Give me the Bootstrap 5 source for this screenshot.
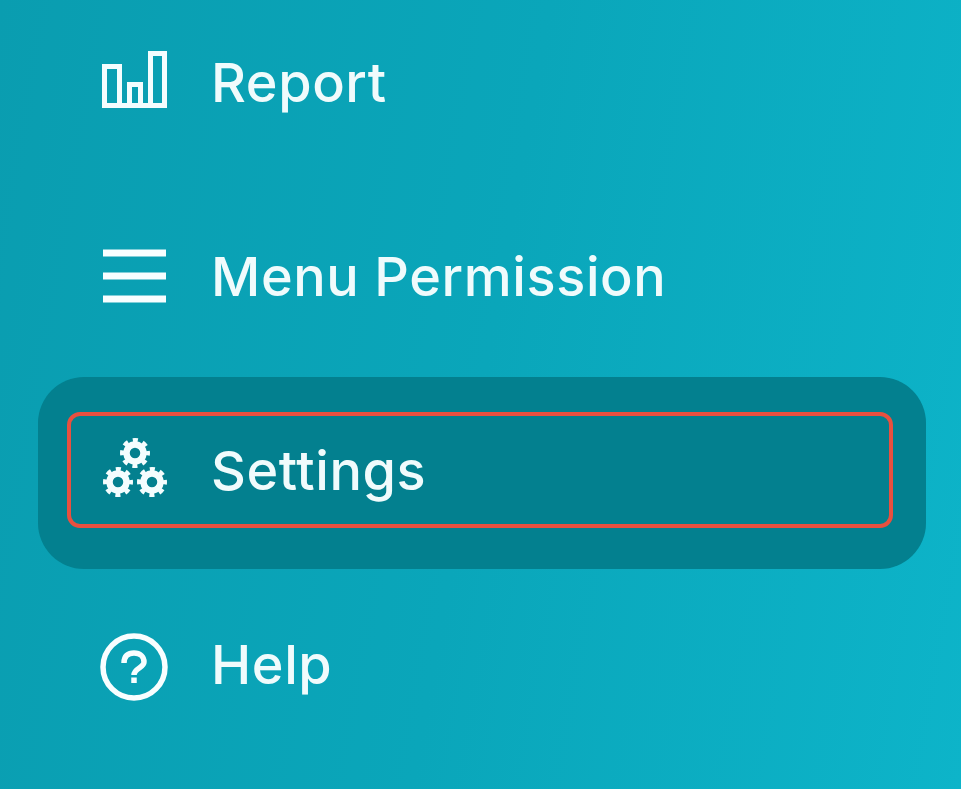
<!DOCTYPE html>
<html lang="en">
<head>
  <meta charset="UTF-8">
  <title>Menu</title>
  <link href="https://cdn.jsdelivr.net/npm/bootstrap@5.3.2/dist/css/bootstrap.min.css" rel="stylesheet">
  <style>
    html, body { height: 100%; }
    body {
      overflow: hidden;
      background: linear-gradient(100deg, #0a9db0 0%, #0aa6ba 50%, #0db4c9 100%);
      font-family: "Inter", "Liberation Sans", sans-serif;
    }
    .side-list { margin-top: -11px; padding: 0 35px 0 38px; gap: 2px; }
    .side-row {
      height: 192px;
      padding: 0 33px 6px 29px;
      border-radius: 46px;
      color: #f0fbfc;
      font-size: 54px;
      font-weight: 500;
      letter-spacing: 0.6px;
      text-decoration: none;
    }
    .side-row:hover { color: #f0fbfc; }
    .side-row.current { background: #03808f; }
    .side-inner {
      height: 116px;
      padding-left: 29px;
      gap: 43px;
      border: 4px solid transparent;
      border-radius: 13px;
    }
    .current .side-inner { border-color: #e8503f; }
    .side-ico { width: 68px; height: 68px; flex: none; overflow: visible; }
    .side-inner > * { filter: blur(0.6px); }
  </style>
</head>
<body>

  <div class="side-list d-flex flex-column">
    <a class="side-row d-flex flex-column justify-content-center" href="#">
      <div class="side-inner d-flex align-items-center">
        <svg class="side-ico" viewBox="0 0 68 68" fill="none" stroke="#f4fdfe" stroke-width="5">
          <rect x="4.5" y="18.5" width="15" height="39"/>
          <rect x="29.5" y="36.5" width="11" height="21"/>
          <rect x="50.5" y="5.5" width="14" height="52"/>
          <path d="M19 57.5H51"/>
        </svg>
        <span>Report</span>
      </div>
    </a>
    <a class="side-row d-flex flex-column justify-content-center" href="#">
      <div class="side-inner d-flex align-items-center">
        <svg class="side-ico" viewBox="0 0 68 68" fill="none" stroke="#f8feff" stroke-width="7">
          <path d="M3 11H66M3 34H66M3 57H66"/>
        </svg>
        <span>Menu Permission</span>
      </div>
    </a>
    <a class="side-row current d-flex flex-column justify-content-center" href="#">
      <div class="side-inner d-flex align-items-center">
        <svg class="side-ico" viewBox="0 0 68 68" fill="none" stroke="#f4fdfe">
          <circle cx="35" cy="17" r="8.5" stroke-width="6.5"/>
          <circle cx="35" cy="17" r="13" stroke-width="4" stroke-dasharray="5.1 5.1" stroke-dashoffset="2.55"/>
          <circle cx="18" cy="46" r="8.5" stroke-width="6.5"/>
          <circle cx="18" cy="46" r="13" stroke-width="4" stroke-dasharray="5.1 5.1" stroke-dashoffset="2.55"/>
          <circle cx="52" cy="46" r="8.5" stroke-width="6.5"/>
          <circle cx="52" cy="46" r="13" stroke-width="4" stroke-dasharray="5.1 5.1" stroke-dashoffset="2.55"/>
        </svg>
        <span>Settings</span>
      </div>
    </a>
    <a class="side-row d-flex flex-column justify-content-center" href="#">
      <div class="side-inner d-flex align-items-center">
        <svg class="side-ico" viewBox="0 0 68 68" fill="none" stroke="#f8feff" stroke-width="5.5">
          <circle cx="34" cy="37" r="31"/>
          <path d="M24 33c0-7 4-10 10-10s10 3.5 10 9c0 6-10 6-10 13"/>
          <path d="M34 47.5v5.5"/>
        </svg>
        <span>Help</span>
      </div>
    </a>
  </div>

  <script src="https://cdn.jsdelivr.net/npm/bootstrap@5.3.2/dist/js/bootstrap.bundle.min.js"></script>
</body>
</html>
